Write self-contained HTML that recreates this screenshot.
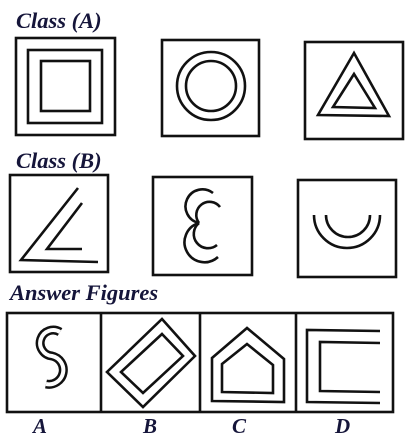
<!DOCTYPE html>
<html><head><meta charset="utf-8"><style>
html,body{margin:0;padding:0;background:#fff;width:410px;height:436px;overflow:hidden}
svg{display:block}
text{font-family:"Liberation Serif",serif;font-weight:bold;font-style:italic;fill:#15153a}
</style></head><body>
<svg width="410" height="436" viewBox="0 0 410 436" xmlns="http://www.w3.org/2000/svg">
<g fill="none" stroke="#111" stroke-width="2.6" stroke-linejoin="miter">
<text x="16" y="28" font-size="22.5" stroke="none">Class (A)</text>
<rect x="16" y="38" width="99" height="97"/>
<rect x="28" y="50" width="74" height="73"/>
<rect x="41" y="61" width="49" height="50"/>
<rect x="162" y="40" width="97" height="96"/>
<circle cx="211" cy="86" r="34"/>
<circle cx="211" cy="86" r="25"/>
<rect x="305" y="42" width="98" height="97"/>
<polygon points="354,53 318,115 389,116"/>
<polygon points="354,74 333,107 375,108"/>

<text x="16" y="168" font-size="22.5" stroke="none">Class (B)</text>
<rect x="10" y="175" width="98" height="97"/>
<polyline points="78,188 21,260 98,262"/>
<polyline points="82,203 47,249 82,249"/>
<rect x="153" y="177" width="99" height="98"/>
<path d="M213,193 A17,17 0 1 0 199,223"/>
<path d="M220,207 A13,13 0 1 0 199,223"/>
<path d="M199,223 A20,20 0 1 0 218,257"/>
<path d="M199,223 A13,13 0 1 0 217,245"/>
<rect x="298" y="180" width="98" height="97"/>
<path d="M314,215 A33,33 0 0 0 380,215"/>
<path d="M326,215 A22,22 0 0 0 370,215"/>

<text x="10" y="300" font-size="22.5" stroke="none">Answer Figures</text>
<rect x="7" y="313" width="386" height="99"/>
<line x1="101" y1="313" x2="101" y2="412"/>
<line x1="200" y1="313" x2="200" y2="412"/>
<line x1="296" y1="313" x2="296" y2="412"/>
<path d="M60,332 A13,13 0 1 0 52,356 A14,14 0 1 1 46,384" stroke-width="9"/>
<path d="M60,332 A13,13 0 1 0 52,356 A14,14 0 1 1 46,384" stroke="#fff" stroke-width="4"/>
<polygon points="162,319 195,356 143,407 107,372"/>
<polygon points="162,334 183,356 143,393 121,372"/>
<polygon points="247,328 212,358 212,401 284,402 284,359"/>
<polygon points="247,344 222,364 222,392 273,393 273,365"/>
<polyline points="380,331 307,330 307,402 380,403"/>
<polyline points="380,343 320,342 320,391 380,392"/>
<text x="33" y="433" font-size="21" stroke="none">A</text>
<text x="143" y="433" font-size="21" stroke="none">B</text>
<text x="232" y="433" font-size="21" stroke="none">C</text>
<text x="335" y="433" font-size="21" stroke="none">D</text>
</g>
</svg>
</body></html>
